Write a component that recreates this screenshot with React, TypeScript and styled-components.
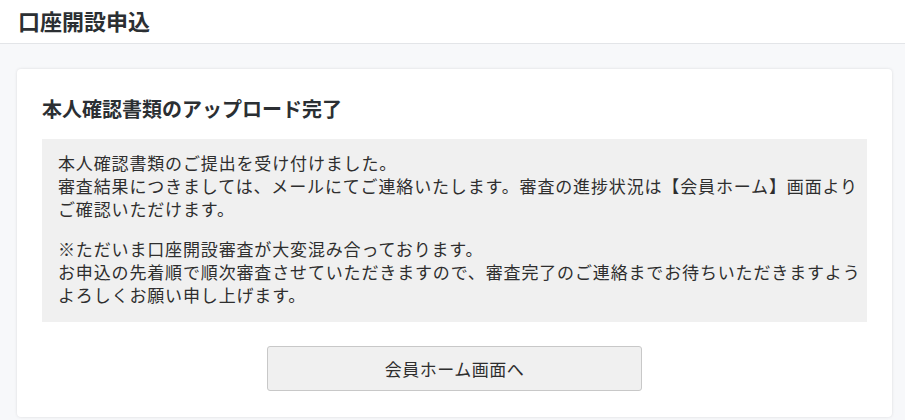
import styled, { createGlobalStyle } from "styled-components";

const GlobalStyle = createGlobalStyle`
  html, body {
    margin: 0;
    padding: 0;
    background: #f7f8fa;
  }

  body {
    font-family: "Noto Sans CJK JP", "Noto Sans", sans-serif;
    color: #333333;
  }
`;

const Page = styled.div`
  min-height: 100vh;
  background: #f7f8fa;
`;

const Header = styled.header`
  height: 43px;
  background: #ffffff;
  border-bottom: 1px solid #e3e5e8;
  padding: 0 18px;

  display: flex;
  align-items: center;
`;

const PageTitle = styled.h1`
  margin: 0;
  font-size: 22px;
  font-weight: 700;
  color: #2b2f33;
  line-height: 1;
  transform: translateY(-2px);
`;

const Main = styled.main`
  padding: 25px 13px 0 17px;
`;

const Card = styled.section`
  background: #ffffff;
  border-radius: 4px;
  box-shadow: 0 0 3px rgba(0, 0, 0, 0.12);
  padding: 26px 25px 26px;

  display: flex;
  flex-direction: column;
`;

const CardTitle = styled.h2`
  margin: 0 0 16px;
  font-size: 20px;
  line-height: 28px;
  font-weight: 700;
  color: #2b2f33;
`;

const Notice = styled.div`
  background: #f0f0f0;
  padding: 12px 8px 16px 16px;
`;

const Paragraph = styled.p`
  margin: 0;
  font-size: 17px;
  line-height: 23px;
  letter-spacing: 0.85px;
  white-space: nowrap;
  color: #2e2e2e;

  & + & {
    margin-top: 17px;
  }
`;

const Actions = styled.div`
  display: flex;
  justify-content: center;
  margin-top: 24px;
`;

const Button = styled.button`
  width: 375px;
  height: 45px;
  background: #f0f0f0;
  border: 1px solid #c8c8c8;
  border-radius: 3px;
  font-family: inherit;
  font-size: 17px;
  letter-spacing: 0.5px;
  color: #2e2e2e;
  cursor: pointer;
`;

export default function App() {
  return (
    <Page>
      <GlobalStyle />
      <Header>
        <PageTitle>口座開設申込</PageTitle>
      </Header>
      <Main>
        <Card>
          <CardTitle>本人確認書類のアップロード完了</CardTitle>
          <Notice>
            <Paragraph>
              本人確認書類のご提出を受け付けました。
              <br />
              審査結果につきましては、メールにてご連絡いたします。審査の進捗状況は【会員ホーム】画面より
              <br />
              ご確認いただけます。
            </Paragraph>
            <Paragraph>
              ※ただいま口座開設審査が大変混み合っております。
              <br />
              お申込の先着順で順次審査させていただきますので、審査完了のご連絡までお待ちいただきますよう
              <br />
              よろしくお願い申し上げます。
            </Paragraph>
          </Notice>
          <Actions>
            <Button type="button">会員ホーム画面へ</Button>
          </Actions>
        </Card>
      </Main>
    </Page>
  );
}
